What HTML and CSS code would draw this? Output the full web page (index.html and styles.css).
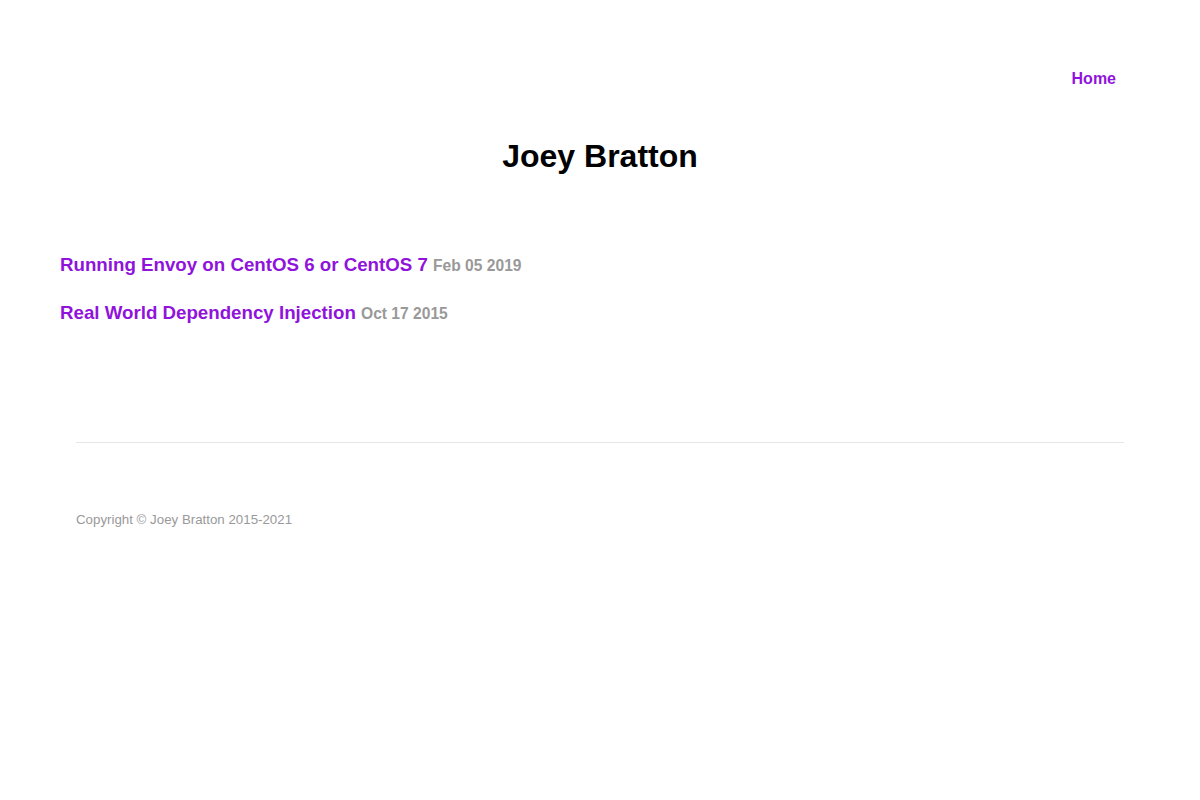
FILE: index.html
```html
<!DOCTYPE html>
<html lang="en">
<head>
<meta charset="utf-8">
<title>Joey Bratton</title>
<link rel="stylesheet" href="styles.css">
</head>
<body>
<header class="site-header">
  <nav class="nav">
    <a class="nav-link" href="#">Home</a>
  </nav>
  <h1 class="site-title">Joey Bratton</h1>
</header>
<main class="posts">
  <h3 class="post"><a class="post-link" href="#">Running Envoy on CentOS 6 or CentOS 7</a> <span class="post-date">Feb 05 2019</span></h3>
  <h3 class="post"><a class="post-link" href="#">Real World Dependency Injection</a> <span class="post-date">Oct 17 2015</span></h3>
</main>
<footer class="site-footer">
  <hr class="rule">
  <p class="copyright">Copyright © Joey Bratton 2015-2021</p>
</footer>
</body>
</html>
```

FILE: styles.css
```css
html, body {
  margin: 0;
  padding: 0;
  background: #ffffff;
  font-family: "Liberation Sans", Arial, sans-serif;
  color: #000;
}
a {
  text-decoration: none;
  color: #9013db;
}
.site-header {
  padding-top: 61px;
}
.nav {
  display: flex;
  justify-content: flex-end;
  padding-right: 84px;
}
.nav-link {
  font-size: 16px;
  font-weight: bold;
  line-height: 36px;
}
.site-title {
  margin: 39px 0 0 0;
  text-align: center;
  font-size: 32px;
  line-height: 40px;
  font-weight: bold;
}
.posts {
  padding: 78px 60px 0 60px;
}
.post {
  margin: 0 0 25px 0;
  font-size: 18.72px;
  line-height: 22px;
  font-weight: bold;
}
.post-date {
  font-size: 15.6px;
  color: #999999;
}
.site-footer {
  padding: 92px 76px 0 76px;
}
.rule {
  margin: 0;
  border: 0;
  border-top: 1px solid #e6e6e6;
}
.copyright {
  margin: 67px 0 0 0;
  font-size: 13.3px;
  line-height: 20px;
  color: #999999;
}
```
